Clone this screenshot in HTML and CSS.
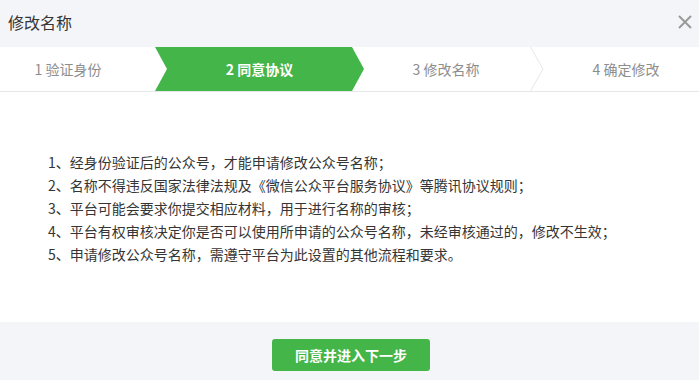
FILE: index.html
```html
<!DOCTYPE html>
<html lang="zh-CN">
<head>
  <meta charset="UTF-8" />
  <meta name="viewport" content="width=device-width, initial-scale=1.0" />
  <title>修改名称</title>
  <link rel="stylesheet" href="styles.css">
</head>
<body>
  <div class="dialog">
    <header class="dialog-head">
      <h3>修改名称</h3>
      <button class="close" aria-label="关闭">
        <svg width="14" height="14" viewBox="0 0 14 14">
          <path d="M1 1 L13 13 M13 1 L1 13" stroke="#9a9a9a" stroke-width="2" fill="none" />
        </svg>
      </button>
    </header>

    <ol class="steps">
      <li class="step step-1">1 验证身份</li>
      <li class="step step-2 current">2 同意协议</li>
      <li class="step step-3">3 修改名称</li>
      <li class="step step-4">
        <svg class="sep" width="14" height="44" viewBox="0 0 14 44">
          <polyline points="0.5,0 13,22 0.5,44" stroke="#e7e7eb" stroke-width="1" fill="none" />
        </svg>
        4 确定修改
      </li>
    </ol>

    <div class="dialog-body">
      <ul class="rules">
        <li>1、经身份验证后的公众号，才能申请修改公众号名称；</li>
        <li>2、名称不得违反国家法律法规及《微信公众平台服务协议》等腾讯协议规则；</li>
        <li>3、平台可能会要求你提交相应材料，用于进行名称的审核；</li>
        <li>4、平台有权审核决定你是否可以使用所申请的公众号名称，未经审核通过的，修改不生效；</li>
        <li>5、申请修改公众号名称，需遵守平台为此设置的其他流程和要求。</li>
      </ul>
    </div>

    <footer class="dialog-foot">
      <button class="btn-primary">同意并进入下一步</button>
    </footer>
  </div>
</body>
</html>
```

FILE: styles.css
```css
:root {
  --green: #44b549;
  --bg-grey: #f4f5f9;
  --line: #e7e7eb;
  --text: #353535;
  --muted: #8d8d8d;
}

body {
  margin: 0;
  font-family: "Microsoft YaHei", "Noto Sans CJK SC", "Noto Sans", sans-serif;
  color: var(--text);
  background: #fff;
}

.dialog {
  width: 699px;
  height: 380px;
  overflow: hidden;
  display: flex;
  flex-direction: column;
}

.dialog-head {
  height: 47px;
  background: var(--bg-grey);
  display: flex;
  align-items: center;
  justify-content: space-between;
  padding: 0 7px 4px 8px;
  box-sizing: border-box;
}

.dialog-head h3 {
  margin: 0;
  font-size: 16px;
  font-weight: normal;
  line-height: 20px;
}

.close {
  border: none;
  background: transparent;
  padding: 0;
  width: 14px;
  height: 14px;
  cursor: pointer;
  display: flex;
}

.steps {
  list-style: none;
  margin: 0;
  padding: 0;
  display: flex;
  height: 44px;
  border-bottom: 1px solid var(--line);
}

.step {
  position: relative;
  box-sizing: border-box;
  display: flex;
  align-items: center;
  justify-content: center;
  font-size: 14px;
  color: var(--muted);
}

.step-1 { width: 155px; padding-right: 19px; }
.step-2 { width: 197px; padding-left: 12px; }
.step-3 { width: 178px; padding-left: 10px; }
.step-4 { flex: 1; padding-left: 23px; }

.step.current {
  background: var(--green);
  color: #fff;
  font-weight: bold;
}

.step.current::before,
.step.current::after {
  content: "";
  position: absolute;
  top: 0;
  border-top: 22px solid transparent;
  border-bottom: 22px solid transparent;
}

.step.current::before {
  left: 0;
  border-left: 12px solid #fff;
}

.step.current::after {
  right: -12px;
  border-left: 12px solid var(--green);
  z-index: 1;
}

.sep {
  position: absolute;
  left: 0;
  top: 0;
}

.dialog-body {
  height: 230px;
  box-sizing: border-box;
  padding: 59px 0 0 48px;
}

.rules {
  list-style: none;
  margin: 0;
  padding: 0;
  font-size: 14px;
  line-height: 23px;
}

.dialog-foot {
  flex: 1;
  background: var(--bg-grey);
  display: flex;
  justify-content: center;
  align-items: flex-start;
  padding-top: 17px;
}

.btn-primary {
  width: 158px;
  height: 32px;
  border: none;
  border-radius: 3px;
  background: var(--green);
  color: #fff;
  font-family: inherit;
  font-size: 14px;
  font-weight: bold;
  margin-left: 3px;
  cursor: pointer;
}
```
